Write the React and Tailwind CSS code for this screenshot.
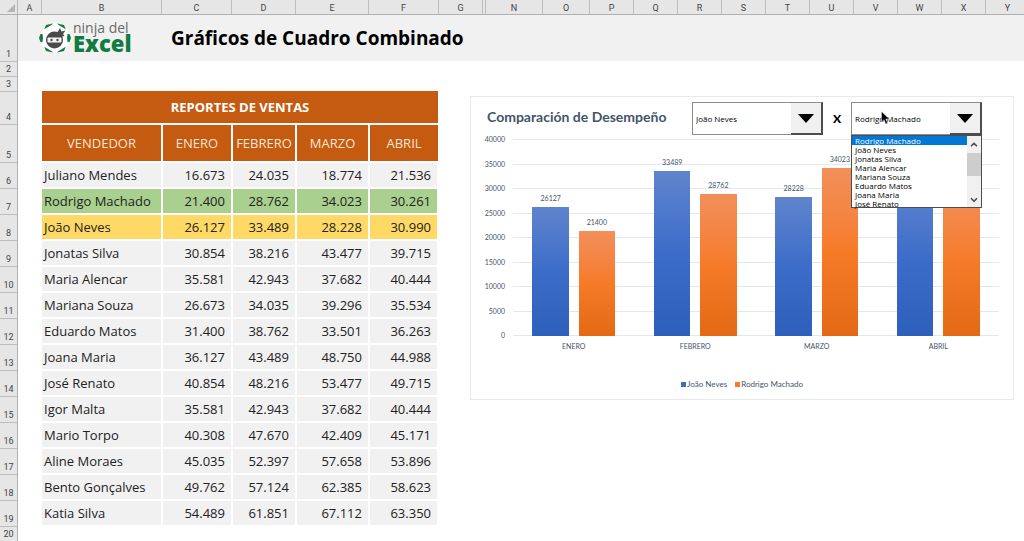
import React, { useState } from 'react';
import clsx from 'clsx';
import { ChevronDown, ChevronUp } from 'lucide-react';

const MONTHS = ['ENERO', 'FEBRERO', 'MARZO', 'ABRIL'];

const SALES = [
  { name: 'Juliano Mendes', values: [16673, 24035, 18774, 21536] },
  { name: 'Rodrigo Machado', values: [21400, 28762, 34023, 30261] },
  { name: 'João Neves', values: [26127, 33489, 28228, 30990] },
  { name: 'Jonatas Silva', values: [30854, 38216, 43477, 39715] },
  { name: 'Maria Alencar', values: [35581, 42943, 37682, 40444] },
  { name: 'Mariana Souza', values: [26673, 34035, 39296, 35534] },
  { name: 'Eduardo Matos', values: [31400, 38762, 33501, 36263] },
  { name: 'Joana Maria', values: [36127, 43489, 48750, 44988] },
  { name: 'José Renato', values: [40854, 48216, 53477, 49715] },
  { name: 'Igor Malta', values: [35581, 42943, 37682, 40444] },
  { name: 'Mario Torpo', values: [40308, 47670, 42409, 45171] },
  { name: 'Aline Moraes', values: [45035, 52397, 57658, 53896] },
  { name: 'Bento Gonçalves', values: [49762, 57124, 62385, 58623] },
  { name: 'Katia Silva', values: [54489, 61851, 67112, 63350] },
];

const COLUMNS = [
  ['A', 'w-[24px]'],
  ['B', 'w-[120px]'],
  ['C', 'w-[70px]'],
  ['D', 'w-[64px]'],
  ['E', 'w-[73px]'],
  ['F', 'w-[70px]'],
  ['G', 'w-[44px]'],
  ['', 'w-[3px]'],
  ['N', 'w-[57px]'],
  ['O', 'w-[47px]'],
  ['P', 'w-[44px]'],
  ['Q', 'w-[44px]'],
  ['R', 'w-[44px]'],
  ['S', 'w-[44px]'],
  ['T', 'w-[44px]'],
  ['U', 'w-[44px]'],
  ['V', 'w-[44px]'],
  ['W', 'w-[44px]'],
  ['X', 'w-[44px]'],
  ['Y', 'w-[44px]'],
];

const ROW_HEIGHTS = { 1: 'h-[47px]', 2: 'h-[15px]', 3: 'h-[15px]', 4: 'h-[33px]', 5: 'h-[38px]', 20: 'h-[15px]' };

const VISIBLE_OPTIONS = 8;

const format = (n) => n.toLocaleString('de-DE');

const Logo = () => (
  <div className="flex items-center gap-[2px]">
    <svg viewBox="0 0 32 32" className="w-8 h-8" aria-hidden="true">
      <g fill="#107c41">
        <path d="M7 3l7-1.500-4 4-5 2.500z" />
        <path d="M25 3l-7-1.500 4 4 5 2.500z" />
        <path d="M7 29l7 1.500-4-4-5-2.500z" />
        <path d="M25 29l-7 1.500 4-4 5-2.500z" />
        <path d="M0 16l1.500-4 2.500 0v8l-2.500 0z" />
        <path d="M32 16l-1.500-4-2.500 0v8l2.500 0z" />
      </g>
      <path d="M16 1l13 7.500-1 7.500 1 7.500L16 31 3 23.500 4 16 3 8.500z" fill="#fff" />
      <circle cx="15.500" cy="18" r="8.500" fill="#4a4a4a" />
      <path d="M18 11l3-5 1.500 3.500 4-1-2.500 3.500 1.500 2-4 1z" fill="#4a4a4a" />
      <rect x="8.500" y="15.500" width="14" height="5" rx="1" fill="#f4f4f4" />
      <circle cx="12.500" cy="18" r="1.200" fill="#4a4a4a" />
      <circle cx="18.500" cy="18" r="1.200" fill="#4a4a4a" />
    </svg>
    <div className="pb-[4px] font-['Open_Sans',sans-serif]">
      <div className="text-[14px] leading-[14px] text-[#6a6a6a]">ninja del</div>
      <div className="text-[22px] leading-[16px] font-extrabold text-[#107c41]">Excel</div>
    </div>
  </div>
);

const Combo = ({ label, value, onChange, defaultOpen = false }) => {
  const [open, setOpen] = useState(defaultOpen);
  const lastOffset = SALES.length - VISIBLE_OPTIONS;
  const [offset, setOffset] = useState(
    Math.min(SALES.findIndex((s) => s.name === value), lastOffset)
  );

  return (
    <div className="relative w-[131px] h-[33px] shrink-0 font-['Open_Sans',sans-serif] text-[8px] text-black">
      <select
        aria-label={label}
        value={value}
        onChange={(e) => onChange(e.target.value)}
        onMouseDown={(e) => {
          e.preventDefault();
          setOpen(!open);
        }}
        className="appearance-none w-full h-full pl-[3px] bg-white border border-[#8c8c8c] border-r-[#4d4d4d] outline-none"
      >
        {SALES.map((s) => (
          <option key={s.name}>{s.name}</option>
        ))}
      </select>
      <span className="absolute right-0 top-0 h-full w-[32px] flex items-center justify-center bg-[#f0f0f0] border-r-2 border-b-2 border-t border-[#4d4d4d] border-t-[#8c8c8c] pointer-events-none">
        <svg viewBox="0 0 16 9" className="w-4 h-[9px]">
          <path d="M0 0h16L8 9z" />
        </svg>
      </span>
      {open && (
        <div className="absolute z-10 left-0 right-0 top-full flex h-[73px] bg-white border border-[#4d4d4d]">
          <ul role="listbox" aria-label={label} className="flex-1">
            {SALES.slice(offset, offset + VISIBLE_OPTIONS).map((s) => (
              <li
                key={s.name}
                role="option"
                aria-selected={s.name === value}
                onClick={() => {
                  onChange(s.name);
                  setOpen(false);
                }}
                className={clsx('h-[9px] leading-[9px] pl-[3px] whitespace-nowrap', s.name === value && 'bg-[#0078d7] text-white')}
              >
                {s.name}
              </li>
            ))}
          </ul>
          <div className="w-[14px] flex flex-col items-center bg-[#f0f0f0] text-[#505050]">
            <button type="button" aria-label="Subir" onClick={() => setOffset(Math.max(offset - 1, 0))}>
              <ChevronUp className="w-[10px] h-[17px]" strokeWidth={4} />
            </button>
            <span className="w-full h-[23px] bg-[#cdcdcd]"></span>
            <button type="button" aria-label="Bajar" className="mt-auto" onClick={() => setOffset(Math.min(offset + 1, lastOffset))}>
              <ChevronDown className="w-[10px] h-[14px]" strokeWidth={4} />
            </button>
          </div>
        </div>
      )}
    </div>
  );
};

const Bar = ({ value, max, className }) => (
  <div className="w-[30%] h-full flex flex-col justify-end">
    <span className="text-center leading-[10px] mb-[4px]">{value}</span>
    <div className={clsx('bg-linear-to-b', className)} style={{ height: `${(value / max) * 100}%` }}></div>
  </div>
);

const Chart = ({ first, second, setFirst, setSecond }) => {
  const a = SALES.find((s) => s.name === first);
  const b = SALES.find((s) => s.name === second);
  const top = Math.max(...a.values, ...b.values);
  const max = Math.ceil(top / 5000) * 5000 + (top % 5000 > 4000 || top < 35000 ? 5000 : 0);
  const ticks = [];
  for (let t = max; t >= 0; t -= 5000) ticks.push(t);

  return (
    <section className="flex-1 mt-[5px] mr-[10px] ml-[32px] h-[304px] border border-[#e6e9ef] font-[Lato,sans-serif] text-[7px] text-[#44546a]">
      <div className="flex items-start pt-[5px] pl-4 pr-[31px] h-[42px]">
        <h2 className="flex-1 pt-[5px] text-[14px] leading-[20px] font-bold whitespace-nowrap">Comparación de Desempeño</h2>
        <Combo label="Primer vendedor" value={first} onChange={setFirst} />
        <span className="w-[28px] text-center text-[12px] leading-[34px] font-black text-black">X</span>
        <Combo label="Segundo vendedor" value={second} onChange={setSecond} defaultOpen />
      </div>

      {/* Plot area */}
      <div className="flex h-[197px] pr-[14px]">
        <div className="w-[34px] mr-[8px] flex flex-col justify-between text-right">
          {ticks.map((t) => (
            <span key={t} className="h-[1px] flex items-center justify-end">{t}</span>
          ))}
        </div>
        <div className="flex-1 grid">
          <div className="[grid-area:1/1] flex flex-col justify-between">
            {ticks.map((t) => (
              <span key={t} className="h-[1px] bg-[#e3e7ee]"></span>
            ))}
          </div>
          <div className="[grid-area:1/1] grid grid-cols-4 min-h-0">
            {MONTHS.map((month, i) => (
              <div key={month} className="flex justify-center gap-[8%] h-[197px]">
                <Bar value={a.values[i]} max={max} className="from-[#5f84cd] via-[#3c6cc9] to-[#2d60ba]" />
                <Bar value={b.values[i]} max={max} className="from-[#f28f5a] via-[#f67b28] to-[#e36913]" />
              </div>
            ))}
          </div>
        </div>
      </div>
      <div className="grid grid-cols-4 pl-[42px] pr-[14px] pt-[5px] text-center leading-[10px]">
        {MONTHS.map((month) => (
          <span key={month}>{month}</span>
        ))}
      </div>
      <div className="flex justify-center gap-[8px] mt-[28px] text-[8px] leading-[10px]">
        <span className="flex items-center gap-[1px]">
          <i className="size-[5px] bg-[#3c6cc9]"></i>
          {first}
        </span>
        <span className="flex items-center gap-[1px]">
          <i className="size-[5px] bg-[#f67b28]"></i>
          {second}
        </span>
      </div>
    </section>
  );
};

const App = () => {
  const [first, setFirst] = useState('João Neves');
  const [second, setSecond] = useState('Rodrigo Machado');

  const rowColor = (name) => {
    if (name === second) return 'bg-[#a9d08e]';
    if (name === first) return 'bg-[#ffd966]';
    return 'bg-[#f1f1f1]';
  };

  return (
    <div className="min-h-screen bg-white overflow-hidden font-['Open_Sans',sans-serif]">
      {/* Column letters */}
      <div className="flex h-[15px] bg-[#e6e6e6] border-b border-[#b0b0b0] font-[Roboto,sans-serif] text-[9px] leading-[16px] text-[#444] text-center overflow-hidden">
        <div className="w-[18px] shrink-0 border-r border-[#b8b8b8] flex items-end justify-end p-[2px]">
          <svg viewBox="0 0 8 8" className="size-2">
            <path d="M8 0v8H0z" fill="#b4b4b4" />
          </svg>
        </div>
        {COLUMNS.map(([letter, width], i) => (
          <div key={i} className={clsx('shrink-0 border-r border-[#bdbdbd]', width)}>{letter}</div>
        ))}
      </div>

      <div className="flex">
        {/* Row numbers */}
        <div className="w-[18px] shrink-0 bg-[#e6e6e6] border-r border-[#b0b0b0] font-[Roboto,sans-serif] text-[9px] leading-[13px] text-[#444] text-center">
          {Array.from({ length: 20 }, (_, i) => i + 1).map((n) => (
            <div key={n} className={clsx('flex items-end justify-center border-b border-[#bdbdbd]', ROW_HEIGHTS[n] || 'h-[26px]')}>
              {n}
            </div>
          ))}
        </div>

        <div className="flex-1 min-w-0">
          <header className="flex items-center h-[46px] pl-[21px] bg-[#f1f1f1]">
            <div className="w-[132px]">
              <Logo />
            </div>
            <h1 className="text-[19px] leading-[26px] font-bold text-black whitespace-nowrap">Gráficos de Cuadro Combinado</h1>
          </header>

          <main className="flex items-start pt-[30px] pl-[24px]">
            <table className="table-fixed w-[396px] shrink-0 border-separate border-spacing-0 text-[13px] leading-[18px] text-[#222]">
              <colgroup>
                <col className="w-[121px]" />
                <col className="w-[70px]" />
                <col className="w-[64px]" />
                <col className="w-[73px]" />
                <col className="w-[68px]" />
              </colgroup>
              <thead className="bg-[#c55a11] text-white">
                <tr className="h-[34px]">
                  <th colSpan={5} className="p-0 border-b-2 border-white">REPORTES DE VENTAS</th>
                </tr>
                <tr className="h-[38px] text-[#fbe5d6]">
                  {['VENDEDOR', ...MONTHS].map((title) => (
                    <th key={title} className="p-0 border-b-2 border-r-2 last:border-r-0 border-white font-normal">{title}</th>
                  ))}
                </tr>
              </thead>
              <tbody>
                {SALES.map((s) => (
                  <tr key={s.name} className={clsx('h-[26px]', rowColor(s.name))}>
                    <td className="p-0 pl-[2px] border-b-2 border-r-2 border-white whitespace-nowrap">{s.name}</td>
                    {s.values.map((v, i) => (
                      <td key={i} className="p-0 pr-[6px] border-b-2 border-r-2 last:border-r border-white text-right">{format(v)}</td>
                    ))}
                  </tr>
                ))}
              </tbody>
            </table>

            <Chart first={first} second={second} setFirst={setFirst} setSecond={setSecond} />
          </main>
        </div>
      </div>

      {/* Mouse pointer */}
      <svg viewBox="0 0 9 14" className="absolute z-20 left-[881px] top-[111px] w-[9px] h-[14px] pointer-events-none">
        <path d="M.5.500v10.500l2.500-2.300 1.800 4.300 1.800-.800-1.800-4.200h3.500z" fill="#000" stroke="#fff" strokeWidth=".4" />
      </svg>
    </div>
  );
};

export default App;
